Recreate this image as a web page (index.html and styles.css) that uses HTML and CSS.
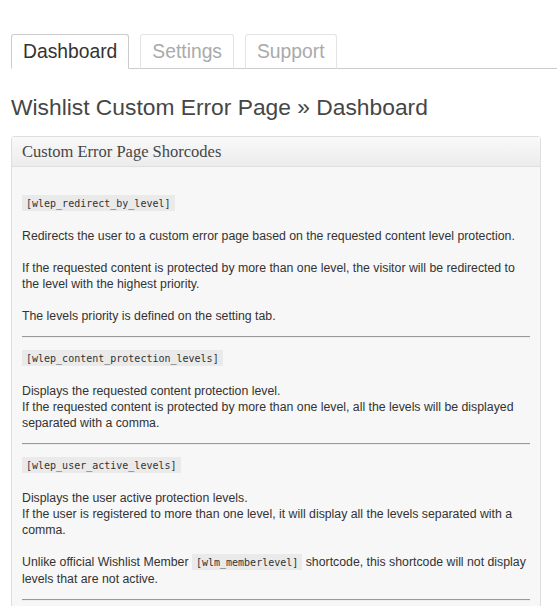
FILE: index.html
```html
<!DOCTYPE html>
<html>
<head>
<meta charset="utf-8">
<link rel="stylesheet" href="styles.css">
</head>
<body>
<div class="wrap">
  <nav class="tabs">
    <a class="tab active">Dashboard</a>
    <a class="tab">Settings</a>
    <a class="tab">Support</a>
  </nav>
  <h1 class="title">Wishlist Custom Error Page » Dashboard</h1>
  <div class="panel">
    <div class="panel-head">Custom Error Page Shorcodes</div>
    <div class="panel-body">
      <div class="section">
        <p><code>[wlep_redirect_by_level]</code></p>
        <p>Redirects the user to a custom error page based on the requested content level protection.</p>
        <p>If the requested content is protected by more than one level, the visitor will be redirected to the level with the highest priority.</p>
        <p>The levels priority is defined on the setting tab.</p>
      </div>
      <hr>
      <div class="section">
        <p><code>[wlep_content_protection_levels]</code></p>
        <p>Displays the requested content protection level.<br>If the requested content is protected by more than one level, all the levels will be displayed separated with a comma.</p>
      </div>
      <hr>
      <div class="section">
        <p><code>[wlep_user_active_levels]</code></p>
        <p>Displays the user active protection levels.<br>If the user is registered to more than one level, it will display all the levels separated with a comma.</p>
        <p>Unlike official Wishlist Member <code>[wlm_memberlevel]</code> shortcode, this shortcode will not display levels that are not active.</p>
      </div>
      <hr>
      <div class="section">
        <p><code>[wlep_level_name]</code></p>
        <p>Displays the name of the level.</p>
      </div>
    </div>
  </div>
</div>
</body>
</html>
```
FILE: styles.css
```css
html, body {
  margin: 0;
  padding: 0;
  background: #fff;
}
body {
  font-family: "Liberation Sans", Arial, sans-serif;
  color: #333;
}
.wrap {
  padding: 34px 0 0 11px;
}
.tabs {
  display: flex;
  gap: 11px;
  border-bottom: 1px solid #ccc;
  height: 34px;
  align-items: flex-end;
}
.tab {
  display: block;
  height: 35px;
  box-sizing: border-box;
  padding: 0 11px;
  font-size: 19.3px;
  line-height: 33px;
  color: #aaa;
  border: 1px solid #e3e3e3;
  border-bottom: 1px solid #ccc;
  border-radius: 3px 3px 0 0;
  background: #fff;
  margin-bottom: -1px;
}
.tab.active {
  color: #333;
  border-color: #ccc;
  border-bottom-color: #fff;
}
.title {
  font-weight: normal;
  font-size: 22.8px;
  line-height: 30px;
  color: #464646;
  margin: 23px 0 0 0;
}
.panel {
  margin-top: 14px;
  width: 530px;
  box-sizing: border-box;
  border: 1px solid #dfdfdf;
  border-radius: 3px;
  background: #f7f7f7;
}
.panel-head {
  height: 30px;
  box-sizing: border-box;
  padding: 0 10px;
  font-family: "Liberation Serif", "Times New Roman", serif;
  font-size: 16.5px;
  line-height: 30px;
  color: #464646;
  background: linear-gradient(#f9f9f9, #ececec);
  border-bottom: 1px solid #dfdfdf;
}
.panel-body {
  padding: 28px 10px 20px;
}
.section {
  display: flex;
  flex-direction: column;
  gap: 16px;
}
.section p {
  margin: 0;
  font-size: 12.3px;
  line-height: 16px;
}
code {
  font-family: "DejaVu Sans Mono", "Liberation Mono", monospace;
  font-size: 10px;
  background: #eaeaea;
  padding: 3px 4px 2px;
  color: #333;
}
hr {
  margin: 12px 0;
  border: none;
  border-top: 1px solid #999;
  border-bottom: 1px solid #eee;
  height: 0;
}
```
